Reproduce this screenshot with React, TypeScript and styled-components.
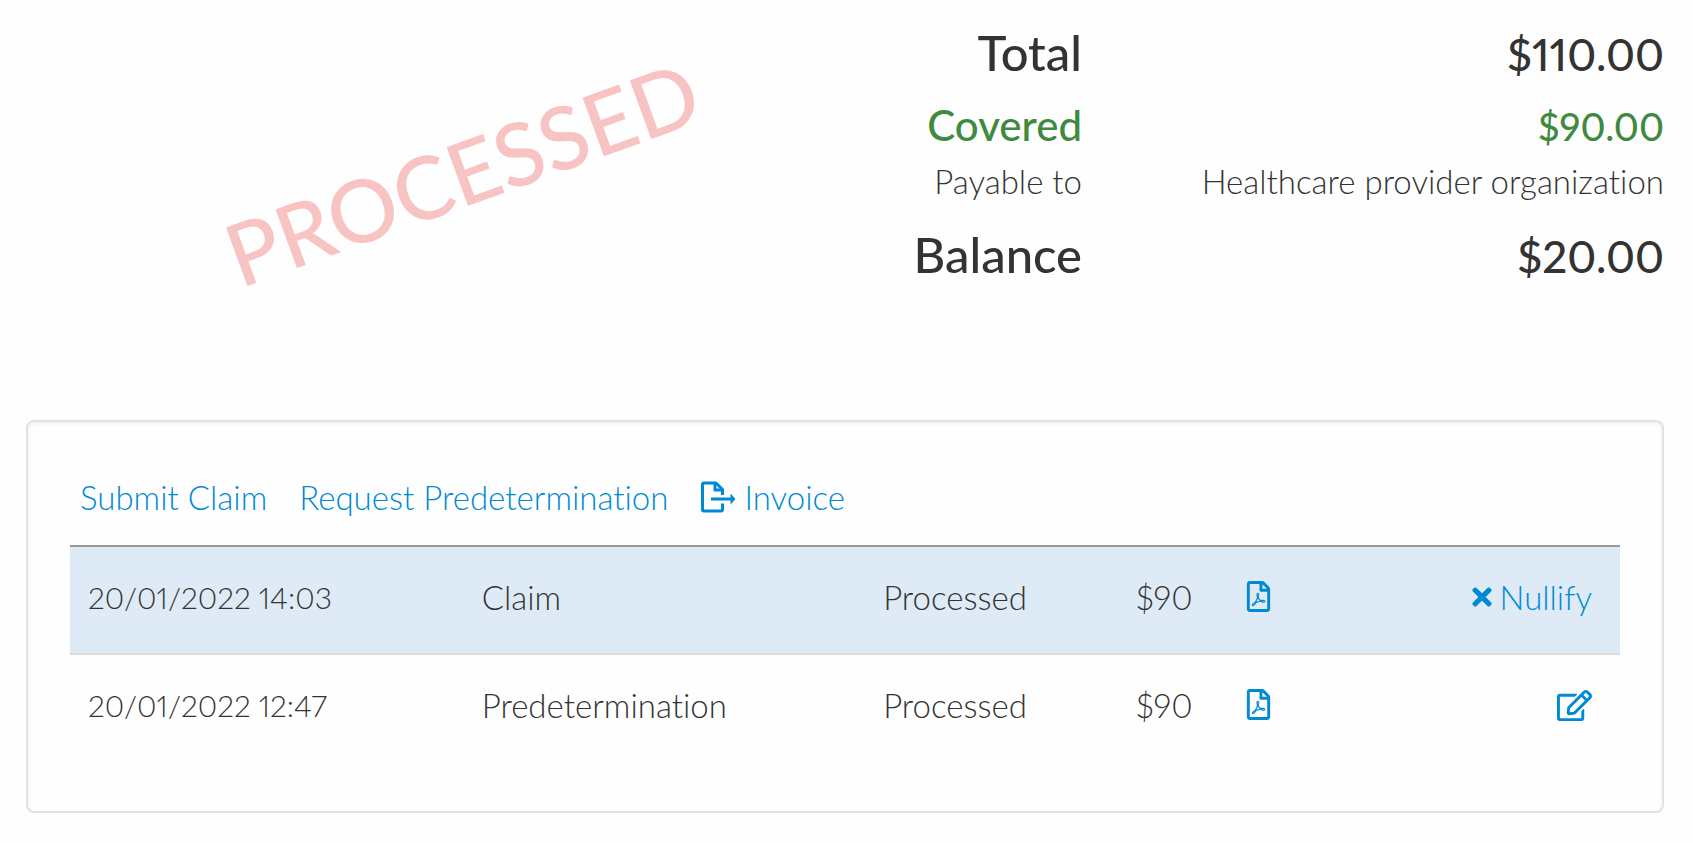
import React from "react";
import styled, { createGlobalStyle } from "styled-components";
import { FaRegEdit, FaRegFilePdf, FaTimes } from "react-icons/fa";

const GlobalStyle = createGlobalStyle`
  *, *::before, *::after { box-sizing: border-box; }
  body {
    margin: 0;
    background: #fefefe;
    color: #333333;
    font-family: Lato, "Open Sans", sans-serif;
    font-size: 33px;
    font-weight: 300;
    font-variant-ligatures: none;
    font-variant-numeric: proportional-nums;
    line-height: 44px;
  }
`;

const Page = styled.main`
  padding: 13px 29px 30px 26px;
`;

const Summary = styled.section`
  display: grid;
  grid-template-columns: 856fr 782fr;
  margin-bottom: 127px;
`;

const StampArea = styled.div`
  display: flex;
  align-items: center;
  justify-content: center;
  padding: 40px 0 0 16px;
`;

const Stamp = styled.span`
  color: #f7c3c3;
  font-size: 87px;
  font-weight: 500;
  line-height: 100px;
  transform: rotate(-20deg);
`;

const Totals = styled.dl`
  margin: 0;
`;

type Tone = "strong" | "covered" | "plain";

const tones: Record<Tone, string> = {
  strong: `
    font-weight: 500;
    line-height: 78px;
    dt { font-size: 49px; }
    dd { font-size: 44px; }
  `,
  covered: `
    font-weight: 500;
    line-height: 68px;
    color: #3f8a40;
    dt { font-size: 42px; }
    dd { font-size: 38px; }
  `,
  plain: "",
};

const TotalRow = styled.div<{ $tone: Tone; $spaced?: boolean }>`
  display: grid;
  grid-template-columns: 200fr 582fr;
  align-items: baseline;
  height: ${(p) => ({ strong: 78, covered: 68, plain: 44 })[p.$tone]}px;
  margin-top: ${(p) => (p.$spaced ? "12px" : "0")};
  text-align: right;
  white-space: nowrap;
  ${(p) => tones[p.$tone]}
`;

const TotalLabel = styled.dt`
  justify-self: end;
`;

const TotalValue = styled.dd`
  margin: 0;
`;

const Panel = styled.section`
  padding: 51px 42px 50px;
  border: 2px solid #e2e2e2;
  border-radius: 8px;
  box-shadow: inset 0 2px 4px rgba(0, 0, 0, 0.06);
`;

const Toolbar = styled.nav`
  display: flex;
  gap: 32px;
  padding: 0 10px 24px;
  line-height: 48px;
`;

const ActionLink = styled.a`
  display: inline-flex;
  align-items: center;
  gap: 8px;
  color: #008ad3;
  text-decoration: none;
  white-space: nowrap;
`;

const ClaimsTable = styled.table`
  width: 100%;
  border-collapse: collapse;
  table-layout: fixed;
  border-top: 2px solid #999999;
`;

const Row = styled.tr<{ $active?: boolean }>`
  background: ${(p) => (p.$active ? "#deebf6" : "transparent")};
  & + & {
    border-top: 2px solid #dddddd;
  }
`;

const Cell = styled.td`
  padding: 28px 18px 34px;
  text-align: left;
  vertical-align: top;
  white-space: nowrap;
`;

const DateCell = styled(Cell)`
  font-size: 30px;
`;

const AmountCell = styled(Cell)`
  padding-right: 32px;
  text-align: right;
`;

const ActionCell = styled(Cell)`
  padding-right: 28px;
  text-align: right;
`;

const IconLink = styled(ActionLink)`
  height: 44px;
  vertical-align: top;
`;

const PdfLink = styled(IconLink)`
  height: 42px;
`;

const CrossIcon = styled(FaTimes)`
  width: 20px;
  height: 28px;
`;

const FileExportIcon = () => (
  <svg width="36" height="32" viewBox="0 0 36 32" fill="none" stroke="currentColor" strokeWidth="3" strokeLinejoin="round" aria-hidden="true">
    <path d="M22.5 14V8.500L16 2H4Q2.500 2 2.500 3.500V28.500Q2.500 30 4 30H21Q22.500 30 22.500 28.500V22.500" />
    <path d="M15 2V9H22.500" />
    <path d="M11 18H31" />
    <path d="M31 13.500L35 18L31 22.500Z" fill="currentColor" strokeWidth="1" />
  </svg>
);

const claims = [
  { date: "20/01/2022 14:03", kind: "Claim", status: "Processed", amount: "$90", active: true },
  { date: "20/01/2022 12:47", kind: "Predetermination", status: "Processed", amount: "$90", active: false },
];

export default function App() {
  return (
    <>
      <GlobalStyle />
      <Page>
        <Summary>
          <StampArea>
            <Stamp>PROCESSED</Stamp>
          </StampArea>
          <Totals>
            <TotalRow $tone="strong">
              <TotalLabel>Total</TotalLabel>
              <TotalValue>$110.00</TotalValue>
            </TotalRow>
            <TotalRow $tone="covered">
              <TotalLabel>Covered</TotalLabel>
              <TotalValue>$90.00</TotalValue>
            </TotalRow>
            <TotalRow $tone="plain">
              <TotalLabel>Payable to</TotalLabel>
              <TotalValue>Healthcare provider organization</TotalValue>
            </TotalRow>
            <TotalRow $tone="strong" $spaced>
              <TotalLabel>Balance</TotalLabel>
              <TotalValue>$20.00</TotalValue>
            </TotalRow>
          </Totals>
        </Summary>
        <Panel>
          <Toolbar>
            <ActionLink href="#submit">Submit Claim</ActionLink>
            <ActionLink href="#predetermination">Request Predetermination</ActionLink>
            <ActionLink href="#invoice">
              <FileExportIcon />
              Invoice
            </ActionLink>
          </Toolbar>
          <ClaimsTable aria-label="Claims">
            <colgroup>
              <col style={{ width: "25.4%" }} />
              <col style={{ width: "25.9%" }} />
              <col style={{ width: "14%" }} />
              <col style={{ width: "9.2%" }} />
              <col style={{ width: "8%" }} />
              <col />
            </colgroup>
            <tbody>
              {claims.map((claim) => (
                <Row key={claim.date} $active={claim.active}>
                  <DateCell>{claim.date}</DateCell>
                  <Cell>{claim.kind}</Cell>
                  <Cell>{claim.status}</Cell>
                  <AmountCell>{claim.amount}</AmountCell>
                  <Cell>
                    <PdfLink href="#pdf" aria-label="Open PDF">
                      <FaRegFilePdf size={31} />
                    </PdfLink>
                  </Cell>
                  <ActionCell>
                    {claim.active ? (
                      <IconLink href="#nullify">
                        <CrossIcon />
                        Nullify
                      </IconLink>
                    ) : (
                      <IconLink href="#edit" aria-label="Edit">
                        <FaRegEdit size={35} />
                      </IconLink>
                    )}
                  </ActionCell>
                </Row>
              ))}
            </tbody>
          </ClaimsTable>
        </Panel>
      </Page>
    </>
  );
}
